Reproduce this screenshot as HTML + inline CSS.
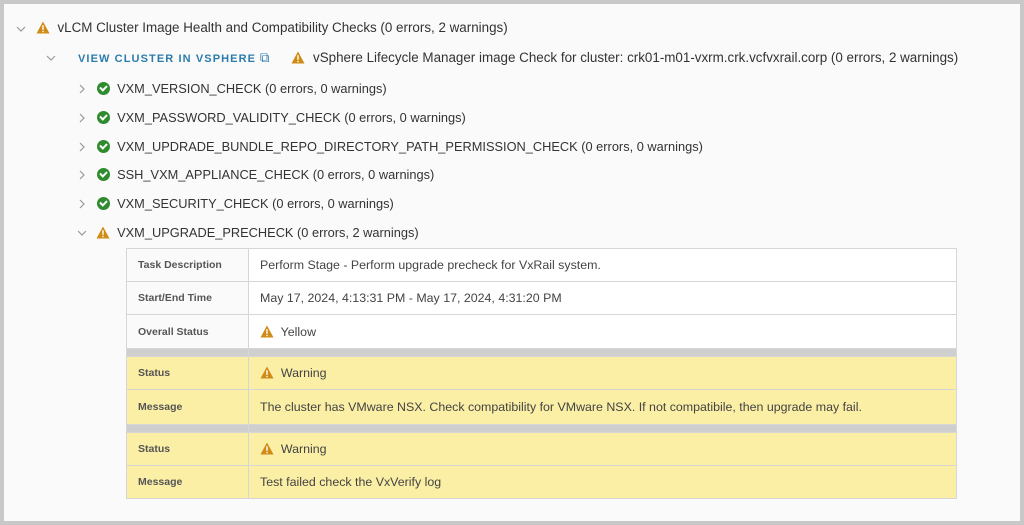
<!DOCTYPE html>
<html><head><style>
body{margin:0;width:1024px;height:525px;background:#c8c8c8;font-family:"Liberation Sans",sans-serif;overflow:hidden}
.frame{position:absolute;left:4px;top:4px;width:1016px;height:517px;background:#fafafa}
.r{position:absolute;font-size:12.8px;color:#333;white-space:nowrap;line-height:16px}
.big{font-size:13.4px}
.chev{position:absolute}
.tri{display:inline-block;vertical-align:-2px}
.ok{display:inline-block;width:13px;height:13px;border-radius:50%;background:#2e8b2e;position:relative;vertical-align:-2px}
.ok:after{content:"";position:absolute;left:3px;top:3px;width:5px;height:3px;border-left:2px solid #fff;border-bottom:2px solid #fff;transform:rotate(-45deg)}
table{position:absolute;left:126px;top:248px;width:831px;border-collapse:collapse;font-size:12.4px;color:#444}
td{border:1px solid #d6d6d6;padding:0 11px;height:32px}
td.l{width:99px;font-weight:bold;font-size:10.5px;background:#fafafa;color:#555}
tr.y td{background:#fbeea5}
tr.g td{background:#cfcfcf;height:7px;padding:0}
td.v{background:#fff}
</style></head><body><div class="frame"></div>
<svg width="0" height="0" style="position:absolute"><defs><symbol id="w" viewBox="0 0 14 13"><path d="M7 .5L13.5 12.5H.5Z" fill="#d08a16"/><rect x="6.3" y="4.2" width="1.4" height="4.6" fill="#fff"/><rect x="6.3" y="9.8" width="1.4" height="1.4" fill="#fff"/></symbol>
<symbol id="d" viewBox="0 0 10 10"><path d="M1 3L5 7L9 3" fill="none" stroke="#999" stroke-width="1.2"/></symbol>
<symbol id="rt" viewBox="0 0 10 10"><path d="M3 1L7 5L3 9" fill="none" stroke="#999" stroke-width="1.2"/></symbol></defs></svg>
<svg class="chev" style="left:16px;top:24px" width="10" height="10"><use href="#d"/></svg>
<div class="r big" style="left:36px;top:20px"><svg class="tri" width="14" height="13"><use href="#w"/></svg>&nbsp;&nbsp;vLCM Cluster Image Health and Compatibility Checks (0 errors, 2 warnings)</div>
<svg class="chev" style="left:46px;top:53px" width="10" height="10"><use href="#d"/></svg>
<div class="r big" style="left:78px;top:50px"><span style="color:#2a7cac;font-size:11px;letter-spacing:1.1px;font-weight:bold">VIEW CLUSTER IN VSPHERE</span> <span style="color:#2a7cac">&#10697;</span></div>
<div class="r big" style="left:291px;top:50px"><svg class="tri" width="14" height="13"><use href="#w"/></svg></div>
<div class="r big" style="left:313px;top:50px">vSphere Lifecycle Manager image Check for cluster: crk01-m01-vxrm.crk.vcfvxrail.corp (0 errors, 2 warnings)</div>
<svg class="chev" style="left:77px;top:84px" width="10" height="10"><use href="#rt"/></svg><div class="r" style="left:97px;top:81px"><span class="ok"></span>&nbsp;&nbsp;VXM_VERSION_CHECK (0 errors, 0 warnings)</div>
<svg class="chev" style="left:77px;top:113px" width="10" height="10"><use href="#rt"/></svg><div class="r" style="left:97px;top:110px"><span class="ok"></span>&nbsp;&nbsp;VXM_PASSWORD_VALIDITY_CHECK (0 errors, 0 warnings)</div>
<svg class="chev" style="left:77px;top:142px" width="10" height="10"><use href="#rt"/></svg><div class="r" style="left:97px;top:139px"><span class="ok"></span>&nbsp;&nbsp;VXM_UPDRADE_BUNDLE_REPO_DIRECTORY_PATH_PERMISSION_CHECK (0 errors, 0 warnings)</div>
<svg class="chev" style="left:77px;top:170px" width="10" height="10"><use href="#rt"/></svg><div class="r" style="left:97px;top:167px"><span class="ok"></span>&nbsp;&nbsp;SSH_VXM_APPLIANCE_CHECK (0 errors, 0 warnings)</div>
<svg class="chev" style="left:77px;top:199px" width="10" height="10"><use href="#rt"/></svg><div class="r" style="left:97px;top:196px"><span class="ok"></span>&nbsp;&nbsp;VXM_SECURITY_CHECK (0 errors, 0 warnings)</div>
<svg class="chev" style="left:77px;top:228px" width="10" height="10"><use href="#d"/></svg><div class="r" style="left:96px;top:225px"><svg class="tri" width="14" height="13"><use href="#w"/></svg>&nbsp;&nbsp;VXM_UPGRADE_PRECHECK (0 errors, 2 warnings)</div>
<table>
<tr><td class="l">Task Description</td><td class="v">Perform Stage - Perform upgrade precheck for VxRail system.</td></tr>
<tr><td class="l">Start/End Time</td><td class="v">May 17, 2024, 4:13:31 PM - May 17, 2024, 4:31:20 PM</td></tr>
<tr><td class="l" style="height:33px">Overall Status</td><td class="v"><svg class="tri" width="14" height="13"><use href="#w"/></svg>&nbsp; Yellow</td></tr>
<tr class="g"><td></td><td></td></tr>
<tr class="y"><td class="l">Status</td><td><svg class="tri" width="14" height="13"><use href="#w"/></svg>&nbsp; Warning</td></tr>
<tr class="y"><td class="l" style="height:34px">Message</td><td>The cluster has VMware NSX. Check compatibility for VMware NSX. If not compatibile, then upgrade may fail.</td></tr>
<tr class="g"><td></td><td></td></tr>
<tr class="y"><td class="l">Status</td><td><svg class="tri" width="14" height="13"><use href="#w"/></svg>&nbsp; Warning</td></tr>
<tr class="y"><td class="l">Message</td><td>Test failed check the VxVerify log</td></tr>
</table>
</body></html>
